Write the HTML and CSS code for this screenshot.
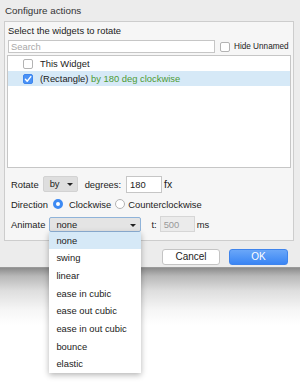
FILE: index.html
```html
<!DOCTYPE html>
<html lang="en">
<head>
    <meta charset="UTF-8">
    <title>Configure actions</title>
    <link rel="stylesheet" href="styles.css">
</head>
<body>
    <div class="sheet">
        <div class="title">Configure actions</div>
        <div class="panel">
            <div class="label">Select the widgets to rotate</div>
            <div class="search-row">
                <div class="search">Search</div>
                <div class="check-label"><span class="check"></span>Hide Unnamed</div>
            </div>
            <div class="list">
                <div class="row"><span class="check"></span>This Widget</div>
                <div class="row selected">
                    <span class="check on">
                        <svg width="10" height="10" viewBox="0 0 10 10"><polyline points="2.4,5.2 4.2,7.2 7.8,2.6" fill="none" stroke="#fff" stroke-width="1.4" stroke-linecap="round" stroke-linejoin="round"/></svg>
                    </span>
                    (Rectangle)&nbsp;<span class="green">by 180 deg clockwise</span>
                </div>
            </div>
            <div class="form">
                <div class="form-row">
                    <span>Rotate</span>
                    <div class="select by">by<span class="arrow"></span></div>
                    <span class="degrees">degrees:</span>
                    <div class="field">180</div>
                    <span class="fx">fx</span>
                </div>
                <div class="form-row">
                    <span>Direction</span>
                    <span class="radio on"></span>
                    <span class="radio-text">Clockwise</span>
                    <span class="radio"></span>
                    <span>Counterclockwise</span>
                </div>
                <div class="form-row">
                    <span>Animate</span>
                    <div class="select anim">none<span class="arrow"></span>
                        <div class="menu">
                            <div class="item active">none</div>
                            <div class="item">swing</div>
                            <div class="item">linear</div>
                            <div class="item">ease in cubic</div>
                            <div class="item">ease out cubic</div>
                            <div class="item">ease in out cubic</div>
                            <div class="item">bounce</div>
                            <div class="item">elastic</div>
                        </div>
                    </div>
                    <span class="t">t:</span>
                    <div class="field disabled">500</div>
                    <span class="ms">ms</span>
                </div>
            </div>
        </div>
        <div class="buttons">
            <div class="btn">Cancel</div>
            <div class="btn primary">OK</div>
        </div>
    </div>
    <div class="shade"></div>
</body>
</html>
```

FILE: styles.css
```css
body {
    margin: 0;
    background: #fff;
    font-family: 'Liberation Sans', Arial, sans-serif;
    font-size: 9.4px;
    color: #222;
}

.sheet {
    background: #ececec;
    height: 268px;
    box-sizing: border-box;
    padding: 0 6px 3px 4px;
    border-bottom: 1px solid #9a9a9a;
}

.title {
    height: 21px;
    line-height: 22px;
    padding-left: 1px;
    font-size: 9.8px;
    color: #333;
}

.panel {
    height: 220px;
    box-sizing: border-box;
    border: 1px solid #cdcdcd;
    background: #f6f6f6;
    padding: 1px 2px 0 2px;
}

.label {
    height: 15px;
    line-height: 15px;
    padding-left: 1px;
}

.search-row {
    display: flex;
    align-items: center;
    margin-top: 2px;
    height: 13px;
}

.search {
    width: 207px;
    height: 13px;
    box-sizing: border-box;
    border: 1px solid #c6c6c6;
    background: #fff;
    color: #a8a8a8;
    line-height: 11px;
    padding-left: 2px;
    margin-left: 1px;
}

.check-label {
    display: flex;
    align-items: center;
    margin-left: 5px;
    font-size: 8.2px;
}

.check {
    width: 10px;
    height: 10px;
    box-sizing: border-box;
    border: 1px solid #b3b3b3;
    border-radius: 2px;
    background: #fff;
    margin-right: 4px;
    flex-shrink: 0;
}

.check.on {
    border-color: #3d86ef;
    background: #4a92f6;
}

.check svg {
    display: block;
    margin: -1px;
}

.list {
    height: 113px;
    box-sizing: border-box;
    margin-top: 2px;
    border: 1px solid #c6c6c6;
    background: #fff;
}

.row {
    height: 15px;
    display: flex;
    align-items: center;
    padding-left: 15px;
}

.row .check {
    margin-right: 7px;
}

.row.selected {
    background: #d6e9f7;
}

.green {
    color: #4d9b36;
}

.form {
    margin-top: 6px;
    padding-left: 4px;
}

.form-row {
    height: 20px;
    display: flex;
    align-items: center;
}

.select {
    position: relative;
    height: 16px;
    box-sizing: border-box;
    background: #dedede;
    border: 1px solid #d2d2d2;
    border-radius: 2px;
    line-height: 14px;
    padding-left: 6px;
    margin-left: 4px;
}

.select.by {
    width: 35px;
}

.select.anim {
    width: 92px;
    height: 15px;
    line-height: 13px;
    border-color: #8fb3d9;
    background: #e4e4e4;
    margin-left: 4px;
}

.arrow {
    position: absolute;
    right: 4px;
    top: 6px;
    border-left: 3px solid transparent;
    border-right: 3px solid transparent;
    border-top: 3px solid #222;
}

.degrees {
    margin-left: 7px;
}

.field {
    width: 36px;
    height: 17px;
    box-sizing: border-box;
    border: 1px solid #c6c6c6;
    background: #fff;
    line-height: 15px;
    padding-left: 3px;
    margin-left: 5px;
}

.field.disabled {
    width: 35px;
    height: 16px;
    background: #ebebeb;
    color: #999;
    border-color: #d6d6d6;
    margin-left: 3px;
}

.fx {
    margin-left: 2px;
    font-size: 10.5px;
}

.radio {
    width: 10px;
    height: 10px;
    box-sizing: border-box;
    border-radius: 50%;
    border: 1px solid #b3b3b3;
    background: #fff;
    margin-left: 4px;
    margin-right: 3px;
}

.radio.on {
    border: 3px solid #3d8af3;
    background: #fff;
    margin-left: 5px;
    margin-right: 6px;
}

.t {
    margin-left: 10px;
}

.ms {
    margin-left: 2px;
}

.menu {
    position: absolute;
    top: 14px;
    left: -1px;
    width: 92px;
    background: #fff;
    box-shadow: 0 2px 6px rgba(0, 0, 0, 0.3);
    z-index: 2;
}

.item {
    height: 17.7px;
    line-height: 17.7px;
    padding-left: 7px;
}

.item.active {
    background: #d6e9f7;
}

.buttons {
    display: flex;
    justify-content: flex-end;
    gap: 9px;
    margin-top: 8px;
    padding-right: 6px;
}

.btn {
    width: 58px;
    height: 16px;
    box-sizing: border-box;
    border: 1px solid #c4c4c4;
    border-radius: 3px;
    background: #fff;
    text-align: center;
    line-height: 14px;
    font-size: 10px;
}

.btn.primary {
    width: 59px;
    border-color: #3f84ec;
    background: linear-gradient(#6aa7f8, #3a85f4);
    color: #fff;
}

.shade {
    height: 114px;
    background: linear-gradient(#8c8c8c, #b8b8b8 7%, #dedede 20%, #f6f6f6 37%, #fff 50%);
}
```
